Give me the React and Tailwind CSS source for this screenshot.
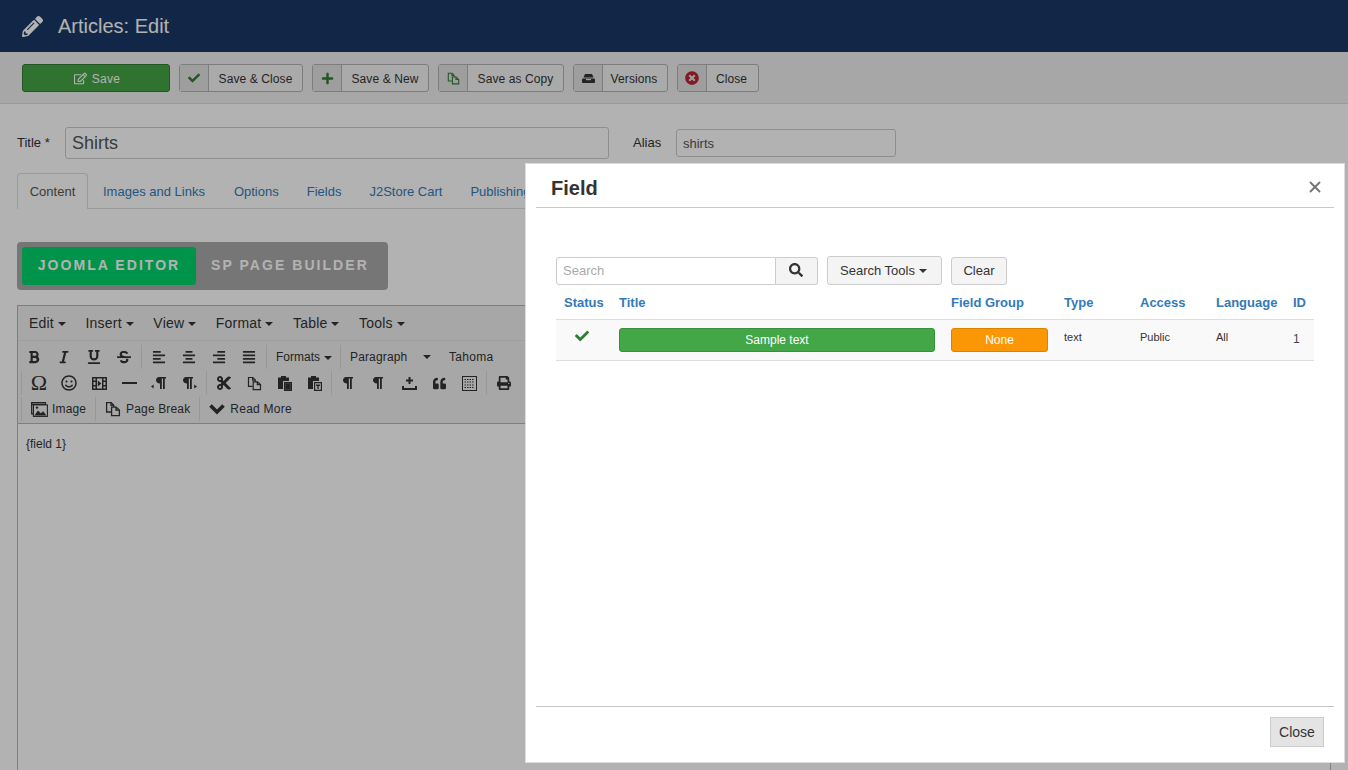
import React from "react";
import {
  FaPencilAlt, FaRegEdit, FaCheck, FaPlus, FaTimesCircle, FaBold, FaItalic, FaUnderline, FaStrikethrough,
  FaAlignLeft, FaAlignCenter, FaAlignRight, FaAlignJustify, FaRegSmile, FaCut, FaQuoteLeft,
  FaPrint, FaSearch,
} from "react-icons/fa";
import { X } from "lucide-react";

function CopyIcon({ size = 15, className = "" }) {
  return (
    <svg width={size} height={size} viewBox="0 0 16 16" fill="none" stroke="currentColor" strokeWidth="1.3" className={className}>
      <path d="M6 11H1.6V1.6h4.6l2.6 2.6V6" />
      <path d="M6 1.6v2.8h2.8" />
      <path d="M6.6 6.2h4.6l3.2 3v5.4H6.6z" />
      <path d="M11 6.2v3h3.4" />
    </svg>
  );
}

function VersionsIcon() {
  return (
    <svg width="13" height="9" viewBox="0 0 13 9" fill="#333">
      <path d="M3 0h7l1.500 3.600H1.500z" />
      <rect x="0" y="4.600" width="13" height="4.400" rx="1" />
      <rect x="4" y="5" width="5" height="1.200" fill="#e2e2e2" />
    </svg>
  );
}

function FilmIcon() {
  return (
    <svg width="15" height="13" viewBox="0 0 15 13" fill="#333">
      <path fillRule="evenodd" d="M0 0h15v13H0zM1.500 1.500v2h2v-2zM1.500 5v3h2V5zM1.500 9.500v2h2v-2zM11.500 1.500v2h2v-2zM11.500 5v3h2V5zM11.500 9.500v2h2v-2zM5 1.500v10h5v-10z" />
      <path d="M5.800 3.500l3.600 3-3.600 3z" />
    </svg>
  );
}

function PilcrowIcon({ side }) {
  return (
    <svg width="16" height="14" viewBox="0 0 16 14" fill="#333">
      <g transform={side === "left" ? "translate(3 0)" : "translate(0 0)"}>
        <path d="M5 1h7v1.600h-1.200V13H9V2.600H7.800V13H6V7.600C3.600 7.600 2 6.200 2 4.300S3.400 1 5 1z" />
      </g>
      {side === "left" && <path d="M0 10.500l2.600-2v4z" />}
      {side === "right" && <path d="M16 10.500l-2.800-2v4z" />}
    </svg>
  );
}

function InsertIcon() {
  return (
    <svg width="15" height="13" viewBox="0 0 15 13" fill="#333">
      <path d="M6.500 0h2v2.500H11v2H8.500V7h-2V4.500H4v-2h2.500z" />
      <path d="M0 9h2v2h11V9h2v4H0z" />
    </svg>
  );
}

function TemplateIcon() {
  return (
    <svg width="15" height="15" viewBox="0 0 15 15" fill="none" stroke="#333">
      <rect x="0.500" y="0.500" width="14" height="14" />
      <path d="M2.500 3.500h10M2.500 6h10M2.500 9h10M2.500 11.500h10" strokeDasharray="1.500 1" />
    </svg>
  );
}

function PasteIcon({ t }) {
  return (
    <svg width="15" height="16" viewBox="0 0 15 16" fill="#333">
      <path d="M1 2.500h3V1h5v1.500h3V6H6v8H1z" />
      <path fillRule="evenodd" d="M7 7h8v9H7zM8.200 8.200v6.600h5.600V8.200z" />
      {t ? <path d="M9 9.500h4V11h-1.300v3h-1.400v-3H9z" /> : <path d="M8.200 8.200h5.600v6.600H8.200z" />}
    </svg>
  );
}

function ImageIcon() {
  return (
    <svg width="17" height="15" viewBox="0 0 17 15" fill="none" stroke="#333" strokeWidth="1.100">
      <path d="M.6.600H14.500v1.800H.6z" />
      <path d="M.6.600v11.300h1.800V2.400" />
      <rect x="2.400" y="2.900" width="14" height="11.500" />
      <path d="M3.400 13.500l3.600-5 2.800 2.800 2.400-2 3.200 4.200z" fill="#333" stroke="none" />
      <circle cx="6" cy="5.600" r="1.200" fill="#333" stroke="none" />
    </svg>
  );
}

function TB({ icon, label, w, tight }) {
  return (
    <div className={`flex h-[28px] rounded-[3px] border border-[#b3b3b3] bg-[#f4f4f4] text-[12px] tracking-[0.1px] text-[#333] ${w}`}>
      <span className="flex w-[29px] shrink-0 items-center justify-center border-r border-[#b3b3b3] bg-[#e2e2e2]">{icon}</span>
      <span className={`flex flex-1 items-center justify-center pt-[1px] ${tight ? "pr-[2px]" : ""}`}>{label}</span>
    </div>
  );
}

function Menu({ label }) {
  return (
    <span className="flex items-center gap-[4px]">
      {label}
      <span className="mt-[1px] h-0 w-0 border-x-[4px] border-t-[4px] border-x-transparent border-t-[#333]" />
    </span>
  );
}

function Sep() {
  return <span className="ml-[2px] mr-[2px] h-[24px] w-px shrink-0 bg-[#d9d9d9]" />;
}

function I({ children }) {
  return <span className="flex h-[24px] w-[30px] shrink-0 items-center justify-center text-[14px] text-[#333]">{children}</span>;
}

function Page() {
  return (
    <div className="h-[770px] overflow-hidden bg-white">
      <header className="flex h-[52px] items-center bg-[#1a3867] pl-[22px] text-white">
        <FaPencilAlt className="text-[21px]" />
        <h1 className="ml-[15px] text-[20px] leading-none">Articles: Edit</h1>
      </header>
      <div className="flex h-[52px] items-start gap-[9px] border-b border-[#dcdcdc] bg-[#f0f0f0] pl-[22px] pt-[12px]">
        <div className="flex h-[28px] w-[148px] items-center justify-center gap-[5px] rounded-[3px] border border-[#2f7d32] bg-[#46a546] pt-[1px] text-[12px] tracking-[0.3px] text-white">
          <FaRegEdit className="ml-[2px] text-[13px]" /> Save
        </div>
        <TB w="w-[124px]" label="Save & Close" icon={<FaCheck className="text-[12px] text-[#2f7d32]" />} />
        <TB w="w-[117px]" label="Save & New" icon={<FaPlus className="text-[13px] text-[#2f7d32]" />} />
        <TB w="w-[126px]" label="Save as Copy" icon={<CopyIcon size={13} className="text-[#2f7d32]" />} />
        <TB w="w-[95px]" tight label="Versions" icon={<VersionsIcon />} />
        <TB w="w-[82px]" tight label="Close" icon={<FaTimesCircle className="text-[14px] text-[#bd2130]" />} />
      </div>

      <div className="px-[17px]">
        <div className="mt-[23px] flex items-center">
          <span className="w-[48px] text-[13px] text-[#333]">Title *</span>
          <div className="flex h-[32px] w-[544px] items-center rounded-[3px] border border-[#ccc] px-[6px] text-[18px] text-[#555]">Shirts</div>
          <span className="ml-[24px] w-[43px] text-[13px] text-[#333]">Alias</span>
          <div className="flex h-[28px] w-[220px] items-center rounded-[3px] border border-[#ccc] px-[6px] pt-[1px] text-[13px] text-[#555]">shirts</div>
        </div>

        <div className="mt-[14px] flex h-[36px] border-b border-[#ddd] text-[13px] text-[#337ab7]">
          <span className="-mb-px flex w-[71px] items-center justify-center rounded-t-[4px] border border-b-0 border-[#ddd] bg-white text-[#555]">Content</span>
          <span className="ml-[15px] flex items-center pt-[2px]">Images and Links</span>
          <span className="ml-[29px] flex items-center pt-[2px]">Options</span>
          <span className="ml-[28px] flex items-center pt-[2px]">Fields</span>
          <span className="ml-[28px] flex items-center pt-[2px]">J2Store Cart</span>
          <span className="ml-[28px] flex items-center pt-[2px]">Publishing</span>
        </div>

        <div className="mt-[33px] flex h-[48px] w-[371px] items-center rounded-[4px] bg-[#aaa] pb-[1px] pl-[5px] text-[14px] font-bold tracking-[2.05px] text-white">
          <span className="flex h-[38px] w-[174px] items-center justify-center rounded-[3px] bg-[#00d56c]">JOOMLA EDITOR</span>
          <span className="ml-[15px] whitespace-nowrap">SP PAGE BUILDER</span>
        </div>

        <div className="mt-[15px] h-[600px] border border-[#b5b5b5]">
          <div className="flex h-[35px] items-center gap-[19.6px] border-b border-[#e2e2e2] bg-[#f0f0f0] pl-[11px] text-[14px] tracking-[0.2px] text-[#333]">
            <Menu label="Edit" /><Menu label="Insert" /><Menu label="View" /><Menu label="Format" /><Menu label="Table" /><Menu label="Tools" />
          </div>
          <div className="h-[83px] border-b border-[#b5b5b5] bg-[#f0f0f0] pt-[3px] text-[12px] text-[#333]">
            <div className="flex h-[26px] items-center pl-[1px]">
              <I><FaBold /></I><I><FaItalic /></I><I><FaUnderline /></I><I><FaStrikethrough /></I><Sep />
              <I><FaAlignLeft /></I><I><FaAlignCenter /></I><I><FaAlignRight /></I><I><FaAlignJustify /></I><Sep />
              <span className="flex w-[71px] items-center pl-[7px]"><Menu label="Formats" /></span>
              <span className="h-[24px] w-px bg-[#d9d9d9]" />
              <span className="ml-[9px] w-[73px] tracking-[0.15px]">Paragraph</span>
              <span className="h-0 w-0 border-x-[4px] border-t-[4px] border-x-transparent border-t-[#333]" />
              <span className="ml-[18px] tracking-[0.3px]">Tahoma</span>
            </div>
            <div className="flex h-[26px] items-center pl-[3px]">
              <span className="h-[24px] w-px bg-[#d9d9d9]" />
              <span className="w-[2px]" />
              <I><span className="font-['Liberation_Serif',serif] text-[22px] leading-none">Ω</span></I><I><FaRegSmile className="text-[16px]" /></I><I><FilmIcon /></I>
              <I><span className="h-[2px] w-[15px] bg-[#333]" /></I><I><PilcrowIcon side="left" /></I><I><PilcrowIcon side="right" /></I><Sep />
              <I><FaCut className="text-[16px]" /></I><I><CopyIcon /></I><I><PasteIcon /></I><I><PasteIcon t /></I><Sep />
              <I><PilcrowIcon /></I><I><PilcrowIcon /></I><I><InsertIcon /></I><I><FaQuoteLeft className="text-[13px]" /></I><I><TemplateIcon /></I><Sep />
              <I><FaPrint /></I>
            </div>
            <div className="flex h-[26px] items-center pl-[3px] tracking-[0.15px]">
              <span className="h-[24px] w-px bg-[#d9d9d9]" />
              <span className="mx-[9px] flex items-center gap-[4px]"><ImageIcon />Image</span>
              <span className="h-[24px] w-px bg-[#d9d9d9]" />
              <span className="mx-[9px] flex items-center gap-[5px]"><CopyIcon size={16} />Page Break</span>
              <span className="h-[24px] w-px bg-[#d9d9d9]" />
              <span className="mx-[9px] flex items-center gap-[5px] tracking-[0.25px]">
                <svg width="16" height="12" viewBox="0 0 16 12" fill="none" stroke="#333" strokeWidth="3.600"><path d="M1.500 2.500L8 9l6.500-6.500" /></svg>
                Read More
              </span>
            </div>
          </div>
          <div className="pl-[8px] pt-[11px] text-[12px] text-[#333]">{"{field 1}"}</div>
        </div>
      </div>
    </div>
  );
}

function Modal() {
  const th = "px-[8px] pt-[2px] text-left text-[13px] font-bold text-[#337ab7]";
  const td = "px-[8px] align-top pt-[9px] text-[11px] text-[#333]";
  const btn = "flex items-center justify-center rounded-[3px] border border-[#ccc] bg-[#f4f4f4] text-[13px] text-[#333]";
  return (
    <div className="absolute left-[525px] top-[163px] flex h-[600px] w-[820px] flex-col border border-[#ddd] bg-white px-[10px]">
      <div className="relative flex h-[44px] shrink-0 items-center border-b border-[#c8c8c8] pl-[15px] pt-[4px] text-[20px] font-bold text-[#333]">
        Field
        <X size={18} strokeWidth={2.600} className="absolute right-[10px] top-[14px] text-[#777]" />
      </div>
      <div className="flex-1 px-[20px] pt-[48px]">
        <div className="flex h-[29px] items-center">
          <div className="flex h-[28px] w-[220px] items-center rounded-l-[3px] border border-[#ccc] px-[6px] text-[13px] text-[#aaa]">Search</div>
          <div className={`${btn} h-[28px] w-[42px] rounded-l-none border-l-0 pb-[2px] pr-[2px]`}><FaSearch className="text-[14px]" /></div>
          <div className={`${btn} ml-[9px] h-[29px] w-[115px] gap-[4px] pr-[2px]`}>Search Tools
            <span className="h-0 w-0 border-x-[4px] border-t-[4px] border-x-transparent border-t-[#333]" />
          </div>
          <div className={`${btn} ml-[9px] h-[28px] w-[56px]`}>Clear</div>
        </div>
        <table className="w-[758px] table-fixed border-collapse">
          <colgroup>
            <col className="w-[55px]" /><col className="w-[332px]" /><col className="w-[113px]" /><col className="w-[76px]" /><col className="w-[76px]" /><col className="w-[77px]" /><col className="w-[29px]" />
          </colgroup>
          <thead>
            <tr className="h-[34px]">
              <th className={th}>Status</th><th className={th}>Title</th><th className={th}>Field Group</th><th className={th}>Type</th><th className={th}>Access</th><th className={th}>Language</th><th className={th}>ID</th>
            </tr>
          </thead>
          <tbody>
            <tr className="h-[41px] border-y border-[#ddd] bg-[#f9f9f9]">
              <td className={td}><FaCheck className="ml-[11px] text-[14px] text-[#2f7d32]" /></td>
              <td className="px-[8px] align-middle"><div className="flex h-[24px] items-center justify-center rounded-[3px] border border-[#388e3c] bg-[#43a647] text-[12px] text-white">Sample text</div></td>
              <td className="px-[8px] align-middle"><div className="flex h-[24px] w-[97px] items-center justify-center rounded-[3px] border border-[#d98300] bg-[#fb9705] text-[12px] text-white">None</div></td>
              <td className={td}>text</td><td className={`${td} text-[#1f2f4f]`}>Public</td><td className={`${td} text-[#1f2f4f]`}>All</td>
              <td className="px-[8px] align-top pt-[10px] text-[12px] text-[#444]">1</td>
            </tr>
          </tbody>
        </table>
      </div>
      <div className="flex h-[56px] shrink-0 items-start justify-end border-t border-[#c8c8c8] pr-[10px] pt-[10px]">
        <div className="flex h-[30px] w-[54px] items-center justify-center border border-[#ccc] bg-[#e4e4e4] text-[14px] text-[#333]">Close</div>
      </div>
    </div>
  );
}

export default function App() {
  return (
    <div className="relative h-[770px] overflow-hidden font-['Liberation_Sans',Arial,sans-serif]">
      <Page />
      <div className="absolute inset-0 bg-black/30" />
      <Modal />
    </div>
  );
}
